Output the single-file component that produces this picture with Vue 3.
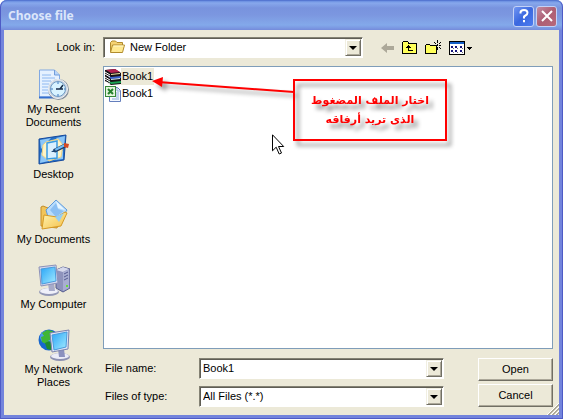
<script setup>
    import { ref } from 'vue'
    const folder = ref('New Folder')
    const fileName = ref('Book1')
    const fileType = ref('All Files (*.*)')
    const selected = ref(0)
    const places = [
        { id: 'recent', title: 'My Recent Documents' },
        { id: 'desktop', title: 'Desktop' },
        { id: 'documents', title: 'My Documents' },
        { id: 'computer', title: 'My Computer' },
        { id: 'network', title: 'My Network Places' }
    ]
    const files = [
        { type: 'rar', name: 'Book1' },
        { type: 'xls', name: 'Book1' }
    ]
    // select a file in the list
    function choose(index) {
        selected.value = index
        fileName.value = files[index].name
    }
</script>

<template>
    <form class="dialog" @submit.prevent>
        <header class="title_bar">
            <h1 class="title">Choose file</h1>
            <button type="button" class="caption_btn help" aria-label="Help">
                <svg width="18" height="18" viewBox="0 0 18 18" fill="none" stroke="#fff" stroke-width="2">
                    <path d="M5.5 6.5V5.500Q5.500 3 9 3t3.500 2.800Q12.500 7.500 10.500 8.500T9 11v.5M9 13v2.300" />
                </svg>
            </button>
            <button type="button" class="caption_btn close" aria-label="Close">
                <svg width="18" height="18" viewBox="0 0 18 18" fill="none" stroke="#fff" stroke-width="2">
                    <path d="M4 4l10 10M14 4L4 14" />
                </svg>
            </button>
        </header>

        <div class="content">
            <label class="look_label" for="look">Look in:</label>

            <!-- folder and toolbar -->
            <div class="look_row">
                <div class="combo look_combo">
                    <svg class="folder" width="16" height="16" viewBox="0 0 16 16">
                        <path d="M1.500 13V3.500L3 2h3.500L8 3.500h5.500V6" fill="#f5d272" stroke="#b18b2c" />
                        <path d="M1.500 13.500L3.500 6h12l-2 7.500z" fill="#ffe991" stroke="#b18b2c" />
                        <path d="M4.500 7h10" stroke="#fff9d0" />
                    </svg>
                    <select id="look" v-model="folder">
                        <option>New Folder</option>
                    </select>
                    <span class="drop"></span>
                </div>
                <div class="toolbar">
                    <button type="button" aria-label="Back">
                        <svg width="14" height="16" viewBox="0 0 14 16">
                            <path d="M0 8l6-5v3h7v4H6v3z" fill="#aca899" />
                        </svg>
                    </button>
                    <button type="button" aria-label="Up One Level">
                        <svg width="16" height="16" viewBox="0 0 16 16" shape-rendering="crispEdges">
                            <path d="M.5 13.500v-11l1-1h4l1 1v1h8v10z" fill="#ffff5a" stroke="#000" />
                            <path d="M4 8h5V7H8V6H7V5H6v1H5v1H4zM6 8h1v2h4v1H6z" fill="#000" />
                        </svg>
                    </button>
                    <button type="button" aria-label="Create New Folder">
                        <svg width="17" height="16" viewBox="0 0 17 16" shape-rendering="crispEdges">
                            <path d="M.5 13.500v-8l1-1h3l1 1h6v8z" fill="#ffff5a" stroke="#000" />
                            <path d="M12 0h1v3h-1zM12 7h1v3h-1zM9 5h2v1H9zM14 5h2v1h-2zM9 2h1v1H9zM10 3h1v1h-1zM15 2h1v1h-1zM14 3h1v1h-1zM14 7h1v1h-1zM15 8h1v1h-1zM12 4h1v2h-1z" fill="#000" />
                        </svg>
                    </button>
                    <button type="button" aria-label="View Menu">
                        <svg width="24" height="16" viewBox="0 0 24 16" shape-rendering="crispEdges">
                            <rect x=".5" y="1.500" width="15" height="13" fill="#fff" stroke="#000" />
                            <path d="M1 2h14v2H1z" fill="#1560c8" />
                            <path d="M2 6h2v2H2zM6 6h2v2H6zM11 6h2v2h-2zM2 10h2v2H2zM6 10h2v2H6zM11 10h2v2h-2z" fill="#15157a" />
                            <path d="M4 8h1v1H4zM8 8h1v1H8zM13 8h1v1h-1zM4 12h1v1H4zM8 12h1v1H8zM13 12h1v1h-1z" fill="#777" />
                            <path d="M18 7h5v1h-1v1h-1v1h-1V9h-1V8h-1z" fill="#000" />
                        </svg>
                    </button>
                </div>
            </div>

            <!-- places bar -->
            <nav class="places">
                <button v-for="place in places" :key="place.id" type="button" class="place">
                    <svg width="32" height="32" viewBox="0 0 32 32">
                        <defs>
                            <linearGradient :id="place.id + 'Screen'" x1="0" y1="0" x2="1" y2="1">
                                <stop offset="0" stop-color="#29a5f7" />
                                <stop offset="1" stop-color="#a5ecff" />
                            </linearGradient>
                            <linearGradient :id="place.id + 'Gold'" x1="0" y1="0" x2="1" y2="1">
                                <stop offset="0" stop-color="#fff7b5" />
                                <stop offset="1" stop-color="#f4bd45" />
                            </linearGradient>
                        </defs>
                        <g v-if="place.id === 'recent'">
                            <path d="M1.500 1h15l5 5v22h-20z" fill="#e5f1ff" stroke="#81a9e3" />
                            <path d="M1 28.500h21" stroke="#356fcf" stroke-width="2" />
                            <path d="M16.500 1v5h5" fill="#b8d5fa" stroke="#719cda" />
                            <path d="M4 6h9M4 9h13M4 12h9M4 15h7M4 18h6M4 21h6M4 24h8" stroke="#8eb8f0" />
                            <circle cx="20.500" cy="20.500" r="10.500" fill="#87919d" />
                            <circle cx="20" cy="20" r="9.500" fill="#c9d3df" stroke="#eef2f6" />
                            <circle cx="20" cy="20" r="7.500" fill="#d8f3ff" stroke="#6d9ac5" />
                            <path d="M18 20h4l3-4M20 20h5" fill="none" stroke="#172d49" stroke-width="1.500" />
                            <path d="M20 13v2M20 25v2M13 20h2M26 20h1" stroke="#3975bd" />
                        </g>
                        <g v-else-if="place.id === 'desktop'">
                            <path d="M1 5l27-4-2 25-25 4z" fill="#2470c8" stroke="#164a9d" />
                            <path d="M2 6l11-2L3 15zM27 2l-1 12-8-10zM2 29l1-11 8 9zM25 25v-9l-8 10z" fill="#8cc6f8" />
                            <path d="M8 8l12-3 5 6-2 12-12 4-7-6 1-10z" fill="#fff4c5" stroke="#efd486" />
                            <path d="M9 9l10-2v17l-10 1z" fill="#d9f0ff" stroke="#389be3" stroke-width="1.500" />
                            <path d="M16 17l12-6" stroke="#223c64" stroke-width="4" />
                            <path d="M17 16l10-5" stroke="#72bdf5" stroke-width="2" />
                            <path d="M13 18l4-3 1 3z" fill="#1d4674" />
                            <path d="M26 9l5 1-1 4-4-1z" fill="#d64a25" />
                        </g>
                        <g v-else-if="place.id === 'documents'">
                            <path d="M3 27V8l2-1 5 2 2 3 11-2 1 5-5 14z" fill="#f1c55a" stroke="#c38c26" />
                            <path d="M8 11L18 1l11 10-9 13-9-3z" fill="#b8dcfb" stroke="#5e9bdc" />
                            <path d="M12 11l6-7 2 6 6 2-8 6z" fill="#8abff3" />
                            <path d="M18 2l9 9-7-2z" fill="#e7f6ff" />
                            <path d="M4 30l2-14 13 2 8-5 2 1-6 13z" :fill="`url(#${place.id}Gold)`" stroke="#d69a25" />
                            <path d="M17 18l9-4-5 9z" fill="#95cef4" />
                        </g>
                        <g v-else-if="place.id === 'computer'">
                            <path d="M18 6l7-3 7 2v19l-7 4-7-4z" fill="#8e93bc" stroke="#555d90" />
                            <path d="M18 6l7-3 6 2-6 3z" fill="#d6d9ec" />
                            <path d="M25 8l6-3v19l-6 3z" fill="#a8aed1" />
                            <path d="M26 10l4-2M26 13l4-2M26 16l4-2" stroke="#555c91" />
                            <path d="M28 21h2v2h-2z" fill="#66dd38" />
                            <ellipse cx="11" cy="28" rx="10" ry="4" fill="#9398b6" />
                            <ellipse cx="11" cy="27" rx="9" ry="3" fill="#eff0fa" />
                            <path d="M10 19l6-1 1 9h-6z" fill="#a7abc9" />
                            <path d="M1 3l17-2 2 18-17 3z" fill="#d4d8ef" stroke="#8c91b8" />
                            <path d="M3 5l14-2 1 14-14 3z" :fill="`url(#${place.id}Screen)`" stroke="#4b9bdc" />
                        </g>
                        <g v-else>
                            <circle cx="11" cy="11" r="10.500" fill="#1767ce" />
                            <circle cx="8" cy="8" r="6" fill="#4d9fe9" />
                            <path d="M4 4l5-3 6 1-1 4 3 2-2 4-4-1-3 4-4-2-1-5 3-1z" fill="#3fb635" />
                            <path d="M7 14l4-2 5 4-3 5-4-1z" fill="#1d8c30" />
                            <ellipse cx="22" cy="28" rx="10" ry="4" fill="#8d91b2" />
                            <ellipse cx="22" cy="27" rx="9" ry="3" fill="#ebecf7" />
                            <path d="M20 20h6l1 8h-6z" fill="#8b91be" />
                            <path d="M12 4l19-3-1 19-16 3z" fill="#dfe4f5" stroke="#7c83ae" />
                            <path d="M14 6l15-3-1 15-12 3z" :fill="`url(#${place.id}Screen)`" stroke="#4b9bdc" />
                        </g>
                    </svg>
                    <span class="place_title">{{place.title}}</span>
                </button>
            </nav>

            <!-- file list -->
            <div class="file_view">
                <ul class="file_ul">
                    <li v-for="(file,index) in files" :key="file.type">
                        <button type="button" :class="{file:true,active:selected===index}" @click="choose(index)">
                            <svg v-if="file.type === 'rar'" width="16" height="16" viewBox="0 0 16 16">
                                <path d="M0 1L10 0l6 4v11l-10 1-6-4z" fill="#171217" />
                                <path d="M1 1l9-1 5 3-9 1z" fill="#b3204f" />
                                <path d="M6 5l9-1v1L6 6z" fill="#f4e3a0" />
                                <path d="M2 6l4 2 10-1v2L6 10z" fill="#3a62d0" />
                                <path d="M6 10l9-1v1l-9 1z" fill="#cfe6f4" />
                                <path d="M2 11l4 2 10-1v2L6 15z" fill="#1ba253" />
                                <path d="M0 3l5 3M0 5l5 3M0 8l5 3M0 10l5 3M1 13l4 2" stroke="#fff" />
                            </svg>
                            <svg v-else width="16" height="16" viewBox="0 0 16 16">
                                <path d="M4.500 1.500h8l3 3v11h-11z" fill="#f4f8ff" stroke="#647ebc" />
                                <path d="M12 2v3h3M11 7h3M11 9h3M11 11h3M7 13h7" fill="none" stroke="#8ca9d8" />
                                <rect x=".5" y=".5" width="10" height="10" fill="#e3f4dc" stroke="#36883a" />
                                <path d="M3 3l5 5M8 3L3 8" stroke="#25802d" stroke-width="2" />
                            </svg>
                            <span class="file_name">{{file.name}}</span>
                        </button>
                    </li>
                </ul>

                <!-- callout -->
                <svg class="arrow" width="150" height="34" viewBox="0 0 150 34">
                    <g class="arrow_shape">
                        <path d="M8 8L144 18" stroke="#f00" stroke-width="2" />
                        <path d="M2 7l11-4-1 10z" fill="#f00" />
                    </g>
                </svg>
                <p class="note" dir="rtl" lang="ar">اختار الملف المضغوط<br>الذى تريد أرفاقه</p>
                <svg class="cursor" width="13" height="21" viewBox="0 0 13 21">
                    <path d="M.5 .8v16l3.700-3.600 3 6.800 2.300-1-3-6.500h5.200z" fill="#fff" stroke="#000" />
                </svg>
            </div>

            <!-- name and type -->
            <div class="fields">
                <label for="fileName">File name:</label>
                <div class="combo">
                    <input id="fileName" v-model="fileName" type="text">
                    <button type="button" class="drop" aria-label="Recent names"></button>
                </div>
                <label for="fileType">Files of type:</label>
                <div class="combo">
                    <select id="fileType" v-model="fileType">
                        <option>All Files (*.*)</option>
                    </select>
                    <span class="drop"></span>
                </div>
            </div>
            <div class="actions">
                <button type="submit" class="push">Open</button>
                <button type="button" class="push">Cancel</button>
            </div>
        </div>
        <svg class="grip" width="12" height="12" viewBox="0 0 12 12">
            <path d="M0 12L12 0M4 12l8-8M8 12l4-4" stroke="#fff" />
            <path d="M1 12L12 1M2 12L12 2M5 12l7-7M6 12l6-6M9 12l3-3M10 12l2-2" stroke="#aca899" />
        </svg>
    </form>
</template>

<style>
    body {
        margin: 0;
        background: #fff;
    }
</style>

<style scoped>
    .dialog {
        position: relative;
        box-sizing: border-box;
        display: flex;
        flex-direction: column;
        min-height: 100vh;
        border: 4px solid #7384dc;
        border-top: 0;
        border-radius: 7px 7px 0 0;
        background: #ece9d8;
        color: #000;
        font: 11px/13px "Liberation Sans", Arial, sans-serif;
    }

    .dialog::after {
        content: '';
        position: absolute;
        inset: 0 -4px -4px;
        border: 1px solid #4e5bc6;
        border-top-color: #5577d2;
        border-radius: 7px 7px 0 0;
        pointer-events: none;
    }

    button,
    input,
    select {
        box-sizing: border-box;
        margin: 0;
        padding: 0;
        border: 0;
        border-radius: 0;
        background: none;
        color: inherit;
        font: inherit;
    }

    svg {
        display: block;
        flex: none;
    }

    /* title bar */
    .title_bar {
        display: flex;
        align-items: center;
        gap: 2px;
        height: 30px;
        margin: 0 -4px;
        padding: 2px 6px 0 8px;
        box-sizing: border-box;
        border-radius: 7px 7px 0 0;
        background: linear-gradient(to bottom, #5a80da, #87a8ec 3px, #7893de 8px, #7c97e0 15px, #83a9ea 25px, #7b98e2 28px, #748bda);
    }

    .title {
        flex: 1;
        margin: 0;
        color: #dce6fa;
        font: bold 12px/20px "Noto Sans", "Open Sans", sans-serif;
    }

    .caption_btn {
        display: flex;
        align-items: center;
        justify-content: center;
        width: 21px;
        height: 21px;
        border: 1px solid #c3d2f7;
        border-radius: 3px;
    }

    .help {
        background: linear-gradient(135deg, #7196f2, #3b68df 50%, #4c7cf0);
    }

    .close {
        background: linear-gradient(135deg, #c18ca3, #ad5e73 50%, #b8697b);
    }

    .content {
        flex: 1;
        display: grid;
        grid-template-columns: 99px 1fr 109px;
        grid-template-rows: auto 1fr auto;
        padding: 7px 6px 8px 0;
    }

    /* folder row */
    .look_label {
        padding-right: 8px;
        line-height: 21px;
        text-align: right;
    }

    .look_row {
        grid-column: 2 / 4;
        display: flex;
        align-items: center;
        padding-bottom: 8px;
    }

    .look_combo {
        flex: 1;
    }

    .toolbar {
        display: flex;
        gap: 7px;
        width: 172px;
        padding-left: 18px;
    }

    .combo {
        position: relative;
        box-sizing: border-box;
        display: flex;
        height: 21px;
        min-width: 0;
        padding: 1px;
        border: 1px solid;
        border-color: #848274 #fff #fff #848274;
        background: #fff;
        box-shadow: inset 1px 1px #5f5d54;
    }

    .combo input,
    .combo select {
        flex: 1;
        min-width: 0;
        height: 17px;
        padding: 0 18px 0 2px;
        line-height: 17px;
        appearance: none;
        outline: none;
    }

    .combo .folder {
        margin: 0 3px 0 4px;
    }

    .drop {
        position: absolute;
        top: 1px;
        right: 1px;
        display: flex;
        align-items: center;
        justify-content: center;
        box-sizing: border-box;
        width: 16px;
        height: 17px;
        border: 1px solid;
        border-color: #f1efe2 #716f64 #716f64 #f1efe2;
        background: #ece9d8;
        box-shadow: inset 1px 1px #fff, inset -1px -1px #aca899;
        pointer-events: none;
    }

    .drop::after {
        content: '';
        border: 4px solid transparent;
        border-top-color: #000;
        border-bottom: 0;
    }

    button.drop {
        pointer-events: auto;
    }

    /* places bar */
    .places {
        grid-row: 2 / 4;
        display: flex;
        flex-direction: column;
        padding-top: 3px;
    }

    .place {
        display: flex;
        flex-direction: column;
        align-items: center;
        gap: 2px;
        height: 65px;
    }

    .place:last-child {
        height: 60px;
    }

    .place_title {
        max-width: 80px;
    }

    /* file list */
    .file_view {
        grid-column: 2 / 4;
        position: relative;
        min-height: 120px;
        border: 1px solid #7f9db9;
        background: #fff;
    }

    .file_ul {
        margin: 0;
        padding: 1px;
        list-style-type: none;
    }

    .file {
        display: flex;
        align-items: center;
        height: 17px;
    }

    .file_name {
        padding: 2px 1px;
    }

    .active .file_name {
        background: #ece9d8;
    }

    .arrow {
        position: absolute;
        top: 7px;
        left: 46px;
    }

    .arrow_shape {
        filter: drop-shadow(4px 4px 2px #999);
    }

    .note {
        position: absolute;
        top: 12px;
        left: 189px;
        box-sizing: border-box;
        width: 154px;
        margin: 0;
        padding: 10px 0;
        border: 2px solid #f00;
        color: #f00;
        font: bold 11px/19px "DejaVu Sans", sans-serif;
        text-align: center;
        filter: drop-shadow(4px 5px 2px #888);
    }

    .cursor {
        position: absolute;
        top: 67px;
        left: 168px;
    }

    /* bottom rows */
    .fields {
        grid-column: 2;
        display: grid;
        grid-template-columns: 96px 1fr;
        row-gap: 7px;
        padding-top: 9px;
        line-height: 21px;
    }

    .fields label {
        padding-left: 2px;
    }

    .actions {
        display: flex;
        flex-direction: column;
        gap: 3px;
        padding: 9px 0 0 34px;
    }

    .push {
        height: 23px;
        border: 1px solid;
        border-color: #fff #716f64 #716f64 #fff;
        background: #ece9d8;
        box-shadow: inset -1px -1px #aca899;
    }

    .grip {
        position: absolute;
        right: 0;
        bottom: 0;
    }
</style>
